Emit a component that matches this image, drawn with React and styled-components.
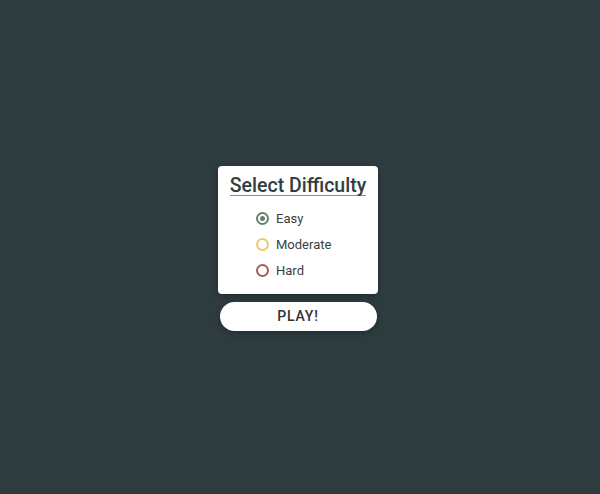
import React, { useState } from 'react'
import styled, { createGlobalStyle } from 'styled-components'

const GlobalStyle = createGlobalStyle`
  html, body {
    margin: 0;
    height: 100%;
    background: #2e3c40;
    font-family: Roboto, "Liberation Sans", sans-serif;
  }
  #root { height: 100%; }
`

const Screen = styled.main`
  height: 100%;
  display: flex;
  flex-direction: column;
  align-items: center;
  justify-content: center;
  gap: 8px;
  padding-right: 4px;
  padding-top: 1px;
`

const Card = styled.section`
  width: 160px;
  box-sizing: border-box;
  background: #fff;
  border-radius: 4px;
  padding: 10px 0 14px;
  display: flex;
  flex-direction: column;
  align-items: center;
  box-shadow: 0 2px 6px rgba(0, 0, 0, 0.3);
`

const Title = styled.h1`
  margin: 0 0 14px;
  font-size: 19.5px;
  font-weight: 500;
  color: #333d40;
  line-height: 19px;
  border-bottom: 1px solid #86918f;
`

const Options = styled.div`
  display: flex;
  flex-direction: column;
  gap: 8px;
  align-self: stretch;
  padding-left: 38px;
`

const Option = styled.label`
  display: flex;
  align-items: center;
  gap: 7px;
  height: 18px;
  font-size: 13px;
  color: #3a3f40;
  cursor: pointer;
`

const Dot = styled.span`
  width: 13px;
  height: 13px;
  box-sizing: border-box;
  border-radius: 50%;
  border: 2px solid ${p => p.$color};
  display: flex;
  align-items: center;
  justify-content: center;

  &::after {
    content: '';
    width: 5px;
    height: 5px;
    border-radius: 50%;
    background: ${p => (p.$checked ? p.$color : 'transparent')};
  }
`

const PlayButton = styled.button`
  width: 157px;
  height: 29px;
  padding-top: 1px;
  border: none;
  border-radius: 15px;
  background: #fff;
  color: #333;
  font-family: Roboto, "Liberation Sans", sans-serif;
  font-size: 14px;
  font-weight: 500;
  letter-spacing: 0.8px;
  box-shadow: 0 2px 6px rgba(0, 0, 0, 0.3);
  cursor: pointer;
`

const levels = [
  { name: 'Easy', color: '#66806d' },
  { name: 'Moderate', color: '#efc672' },
  { name: 'Hard', color: '#a65b5b' },
]

export default function App() {
  const [level, setLevel] = useState('Easy')

  return (
    <>
      <GlobalStyle />
      <Screen>
        <Card>
          <Title>Select Difficulty</Title>
          <Options>
            {levels.map(l => (
              <Option key={l.name} onClick={() => setLevel(l.name)}>
                <Dot $color={l.color} $checked={level === l.name} />
                {l.name}
              </Option>
            ))}
          </Options>
        </Card>
        <PlayButton>PLAY!</PlayButton>
      </Screen>
    </>
  )
}
